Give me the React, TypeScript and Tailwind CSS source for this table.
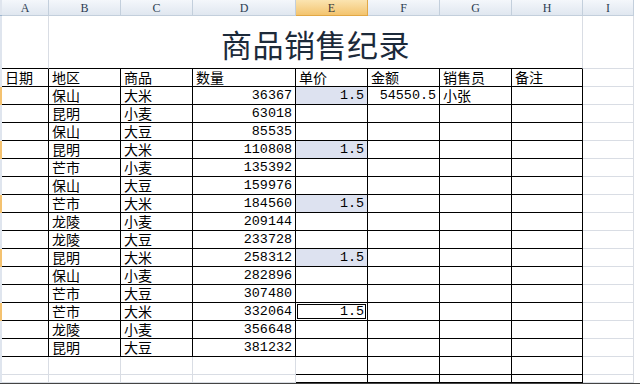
import React from "react";

const cjk = "font-['Noto_Sans_CJK_SC',sans-serif]";
const mono = "font-['Liberation_Mono','Noto_Sans_CJK_SC',monospace]";

const widths = ["w-[47px]", "w-[72px]", "w-[72px]", "w-[103px]", "w-[72px]", "w-[72px]", "w-[72px]", "w-[71px]", "w-[51px]"];
const letters = ["A", "B", "C", "D", "E", "F", "G", "H", "I"];

type Rec = { area: string; item: string; qty: number; price?: string; amount?: string; seller?: string; active?: boolean };

const records: Rec[] = [
  { area: "保山", item: "大米", qty: 36367, price: "1.5", amount: "54550.5", seller: "小张" },
  { area: "昆明", item: "小麦", qty: 63018 },
  { area: "保山", item: "大豆", qty: 85535 },
  { area: "昆明", item: "大米", qty: 110808, price: "1.5" },
  { area: "芒市", item: "小麦", qty: 135392 },
  { area: "保山", item: "大豆", qty: 159976 },
  { area: "芒市", item: "大米", qty: 184560, price: "1.5" },
  { area: "龙陵", item: "小麦", qty: 209144 },
  { area: "龙陵", item: "大豆", qty: 233728 },
  { area: "昆明", item: "大米", qty: 258312, price: "1.5" },
  { area: "保山", item: "小麦", qty: 282896 },
  { area: "芒市", item: "大豆", qty: 307480 },
  { area: "芒市", item: "大米", qty: 332064, price: "1.5", active: true },
  { area: "龙陵", item: "小麦", qty: 356648 },
  { area: "昆明", item: "大豆", qty: 381232 },
];

function Cell({
  i,
  black,
  right,
  sel,
  active,
  children,
}: {
  i: number;
  black?: boolean;
  right?: boolean;
  sel?: boolean;
  active?: boolean;
  children?: React.ReactNode;
}) {
  return (
    <div
      className={`${widths[i]} relative shrink-0 h-full border-r border-b px-[3px] flex ${
        right ? "justify-end items-end" : "justify-start items-center pb-[2px]"
      } ${black ? "border-black" : "border-[#d9dde4]"} ${sel ? "bg-[#dde2f0]" : ""}`}
    >
      {active && <div className="absolute inset-[1px] border border-black" />}
      <span
        className={`block h-[16px] whitespace-nowrap text-black ${
          right ? `${mono} text-[13.4px] leading-[16px]` : `${cjk} text-[14px] leading-[16px]`
        }`}
      >
        {children}
      </span>
    </div>
  );
}

function Strip({ on }: { on?: boolean }) {
  return <div className={`w-[2px] shrink-0 h-full ${on ? "bg-[#f4c270]" : "bg-[#dfe5ee]"}`} />;
}

export default function App() {
  return (
    <div className="w-[640px] h-[384px] overflow-hidden bg-white flex flex-col">
      {/* column letters */}
      <div className="h-[16px] flex shrink-0">
        <div className="w-[2px] shrink-0 bg-[#dfe5ee] border-b border-[#9eb6ce]" />
        {letters.map((l, i) => (
          <div
            key={l}
            className={`${widths[i]} shrink-0 border-r border-b flex items-center justify-center text-[12px] font-['Liberation_Serif',serif] ${
              i === 4
                ? "bg-gradient-to-b from-[#fbe4b0] to-[#f3c46e] border-[#e2a845] text-[#3b3b3b]"
                : "bg-gradient-to-b from-[#f4f7fb] to-[#e0e7f0] border-[#c3cfdc] text-[#2d3d52]"
            }`}
          >
            {l}
          </div>
        ))}
        <div className="flex-1" />
      </div>

      {/* title row */}
      <div className="h-[53px] flex shrink-0">
        <Strip />
        <div className="w-[47px] shrink-0 border-r border-b border-r-[#d9dde4] border-b-black" />
        <div className="w-[534px] shrink-0 border-r border-b border-r-[#d9dde4] border-b-black flex items-center justify-center pt-[2px]">
          <span className={`${cjk} text-[31px] leading-none text-[#1c2a3a] tracking-[0.5px]`}>商品销售纪录</span>
        </div>
        <div className="w-[51px] shrink-0 border-r border-b border-[#d9dde4]" />
      </div>

      {/* header row */}
      <div className="h-[18px] flex shrink-0">
        <Strip />
        {["日期", "地区", "商品", "数量", "单价", "金额", "销售员", "备注"].map((t, i) => (
          <Cell key={t} i={i} black>
            {t}
          </Cell>
        ))}
        <Cell i={8} />
      </div>

      {records.map((r, k) => (
        <div key={k} className="h-[18px] flex shrink-0">
          <Strip on={!!r.price} />
          <Cell i={0} black />
          <Cell i={1} black>
            {r.area}
          </Cell>
          <Cell i={2} black>
            {r.item}
          </Cell>
          <Cell i={3} black right>
            {r.qty}
          </Cell>
          <Cell i={4} black right sel={!!r.price && !r.active} active={r.active}>
            {r.price}
          </Cell>
          <Cell i={5} black right>
            {r.amount}
          </Cell>
          <Cell i={6} black>
            {r.seller}
          </Cell>
          <Cell i={7} black />
          <Cell i={8} />
        </div>
      ))}

      {/* trailing rows */}
      {["h-[18px]", "h-[8px]"].map((h) => (
        <div key={h} className={`${h} flex shrink-0`}>
          <Strip />
          {[0, 1, 2, 3].map((i) => (
            <Cell key={i} i={i} />
          ))}
          {[4, 5, 6, 7].map((i) => (
            <Cell key={i} i={i} black />
          ))}
          <Cell i={8} />
        </div>
      ))}
      <div className="h-[1px] bg-[#444] shrink-0" />
    </div>
  );
}
